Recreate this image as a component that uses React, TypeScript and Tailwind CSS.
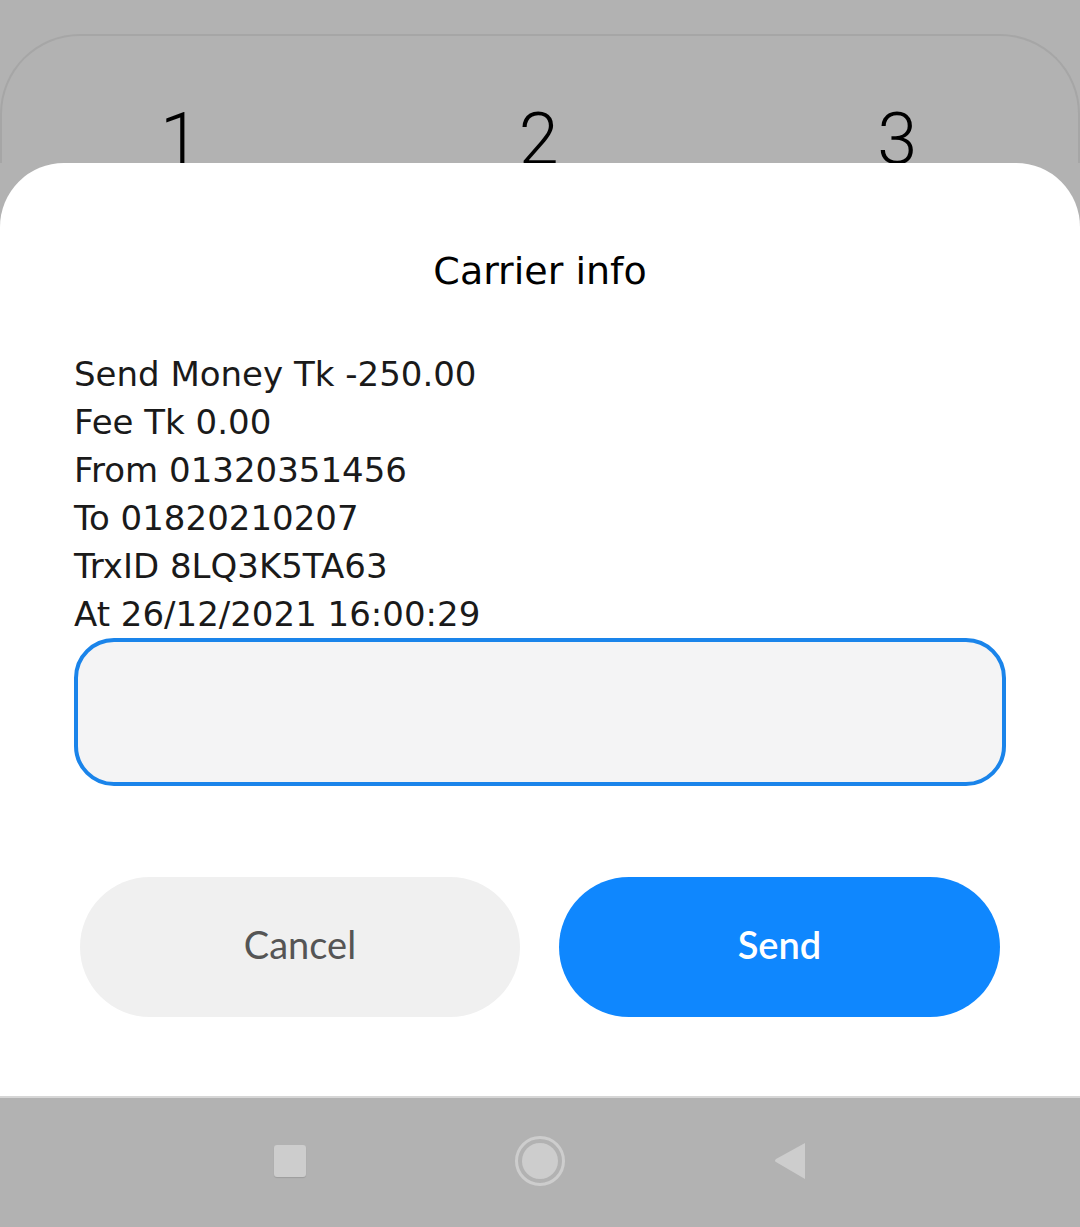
import { useState } from 'react'

const lines = [
  'Send Money Tk -250.00',
  'Fee Tk 0.00',
  'From 01320351456',
  'To 01820210207',
  'TrxID 8LQ3K5TA63',
  'At 26/12/2021 16:00:29',
]

export default function App() {
  const [note, setNote] = useState('')

  return (
    <div className="flex h-[1227px] w-[1080px] flex-col overflow-hidden bg-[#b2b2b2] font-['DejaVu_Sans',sans-serif]">
      {/* dialer behind the sheet */}
      <div className="h-[163px] shrink-0 overflow-hidden pt-[34px]">
        <div className="h-[200px] rounded-t-[80px] border-t-2 border-x-2 border-[#a6a6a6] bg-[#b2b2b2]">
          <div className="grid grid-cols-3 pt-[68px] font-['Roboto',sans-serif] text-[72px] font-light leading-none text-black">
            <span className="pl-[158px]">1</span>
            <span className="pl-[158px]">2</span>
            <span className="pl-[158px]">3</span>
          </div>
        </div>
      </div>

      {/* sheet */}
      <div className="flex h-[933px] shrink-0 flex-col rounded-t-[64px] bg-white px-[74px]">
        <h2 className="pt-[86px] text-center text-[38px] leading-[44px] text-black">Carrier info</h2>

        <div className="mt-[57px] text-[34px] leading-[48px] text-[#1a1a1a]">
          {lines.map(l => (
            <p key={l}>{l}</p>
          ))}
        </div>

        <textarea
          value={note}
          onChange={e => setNote(e.target.value)}
          className="h-[148px] w-[932px] resize-none rounded-[40px] border-4 border-[#1a84ea] bg-[#f4f4f5] px-8 py-6 text-[32px] outline-none"
        />

        <div className="mt-[91px] flex gap-[39px] px-[6px]">
          <button className="h-[140px] w-[440px] rounded-full bg-[#f0f0f0] pb-[6px] font-['Lato',sans-serif] text-[38px] text-[#555]">
            Cancel
          </button>
          <button className="h-[140px] w-[441px] rounded-full bg-[#0f87fe] pb-[6px] font-['Lato',sans-serif] text-[38px] font-semibold text-white">
            Send
          </button>
        </div>
      </div>

      {/* nav bar */}
      <div className="flex flex-1 items-center justify-center gap-[209px] border-t-2 border-[#d6d6d6] bg-[#b2b2b2] pb-[4px]">
        <div className="h-[32px] w-[32px] rounded-[3px] bg-[#cdcdcd] shadow-[0_1px_1px_rgba(0,0,0,0.12)]" />
        <div className="flex h-[50px] w-[50px] items-center justify-center rounded-full border-[3px] border-[#cdcdcd]">
          <div className="h-[36px] w-[36px] rounded-full bg-[#cdcdcd]" />
        </div>
        <svg width="32" height="38" viewBox="0 0 32 38">
          <path d="M31 1 L31 37 L2 20 Q0 19 2 17 Z" fill="#cdcdcd" />
        </svg>
      </div>
    </div>
  )
}
